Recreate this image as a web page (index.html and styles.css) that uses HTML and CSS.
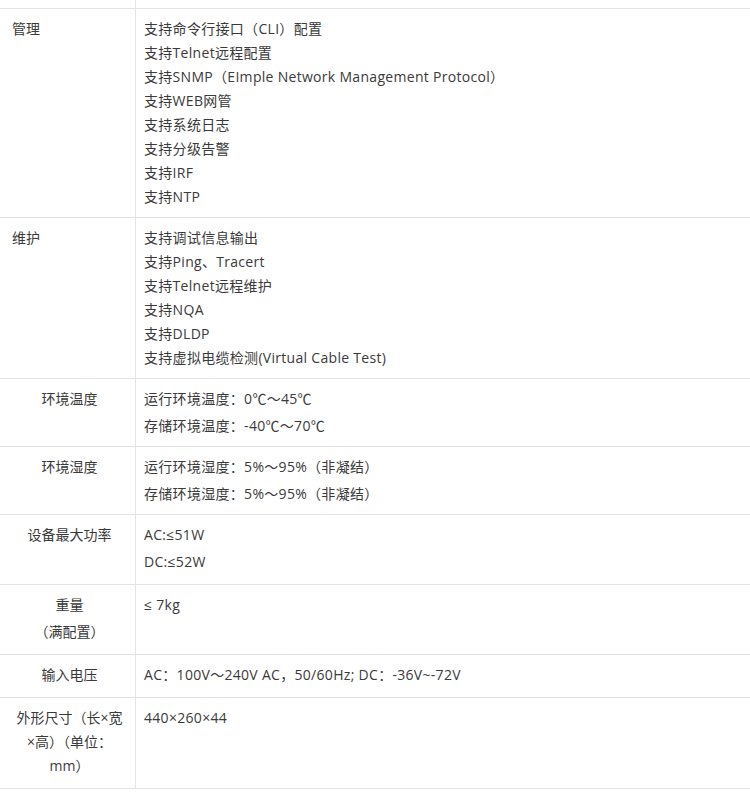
FILE: index.html
```html
<!DOCTYPE html>
<html lang="zh-CN">
  <head>
    <meta charset="UTF-8" />
    <meta name="viewport" content="width=device-width, initial-scale=1.0" />
    <title>规格参数</title>
    <link rel="stylesheet" href="styles.css">
  </head>
  <body>
    <div class="spec">
      <div class="spec-row tail">
        <div class="spec-label"></div>
        <div class="spec-value"></div>
      </div>

      <div class="spec-row">
        <div class="spec-label left">管理</div>
        <div class="spec-value">
          <p>支持命令行接口（CLI）配置</p>
          <p>支持Telnet远程配置</p>
          <p>支持SNMP（EImple Network Management Protocol）</p>
          <p>支持WEB网管</p>
          <p>支持系统日志</p>
          <p>支持分级告警</p>
          <p>支持IRF</p>
          <p>支持NTP</p>
        </div>
      </div>

      <div class="spec-row">
        <div class="spec-label left">维护</div>
        <div class="spec-value">
          <p>支持调试信息输出</p>
          <p>支持Ping、Tracert</p>
          <p>支持Telnet远程维护</p>
          <p>支持NQA</p>
          <p>支持DLDP</p>
          <p>支持虚拟电缆检测(Virtual Cable Test)</p>
        </div>
      </div>

      <div class="spec-row spaced">
        <div class="spec-label">环境温度</div>
        <div class="spec-value">
          <p>运行环境温度：0℃～45℃</p>
          <p>存储环境温度：-40℃～70℃</p>
        </div>
      </div>

      <div class="spec-row spaced">
        <div class="spec-label">环境湿度</div>
        <div class="spec-value">
          <p>运行环境湿度：5%～95%（非凝结）</p>
          <p>存储环境湿度：5%～95%（非凝结）</p>
        </div>
      </div>

      <div class="spec-row spaced tall">
        <div class="spec-label">设备最大功率</div>
        <div class="spec-value">
          <p>AC:≤51W</p>
          <p>DC:≤52W</p>
        </div>
      </div>

      <div class="spec-row spaced tall">
        <div class="spec-label">
          <p>重量</p>
          <p>（满配置）</p>
        </div>
        <div class="spec-value">
          <p>≤ 7kg</p>
        </div>
      </div>

      <div class="spec-row tall">
        <div class="spec-label">输入电压</div>
        <div class="spec-value">
          <p>AC：100V～240V AC，50/60Hz; DC：-36V~-72V</p>
        </div>
      </div>

      <div class="spec-row tall">
        <div class="spec-label">外形尺寸（长×宽×高）（单位：mm）</div>
        <div class="spec-value">
          <p>440×260×44</p>
        </div>
      </div>
    </div>
  </body>
</html>
```

FILE: styles.css
```css
* {
  margin: 0;
  padding: 0;
  box-sizing: border-box;
}

body {
  background: #fff;
  color: #3a3a3a;
  font-family: "Open Sans", "Noto Sans CJK SC", sans-serif;
  font-size: 14px;
  line-height: 24px;
}

.spec {
  width: 100%;
}

.spec-row {
  display: grid;
  grid-template-columns: 136px 1fr;
  border-bottom: 1px solid #e4e4e4;
}

.spec-row.tail {
  height: 9px;
}

.spec-label {
  border-right: 1px solid #e4e4e4;
  padding: 8px 11px 8px 15px;
  text-align: center;
}

.spec-label.left {
  padding-left: 12px;
  text-align: left;
}

.spec-value {
  padding: 8px 8px 8px 8px;
  letter-spacing: 0.3px;
}

.spec-row.tail .spec-label,
.spec-row.tail .spec-value {
  padding: 0;
}

.spec-row.spaced p + p {
  margin-top: 3px;
}

.spec-row.tall .spec-label,
.spec-row.tall .spec-value {
  padding-bottom: 10px;
}
```
